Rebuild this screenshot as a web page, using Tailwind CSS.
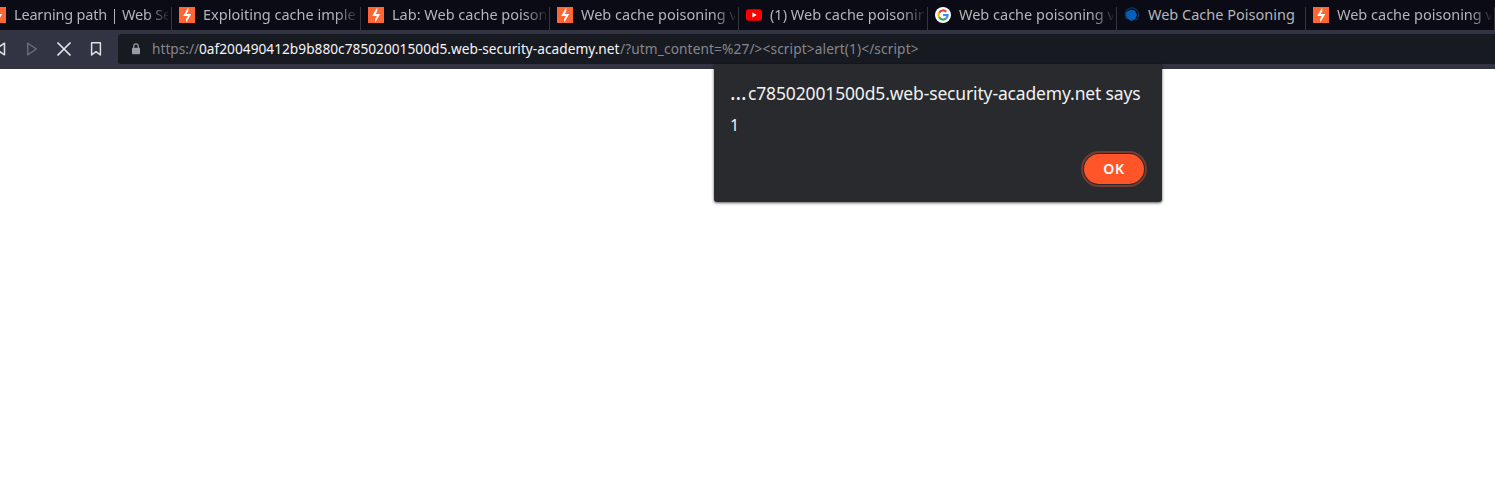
<!DOCTYPE html>
<html lang="en">
<head>
<meta charset="utf-8">
<title>Browser</title>
<script src="https://cdn.jsdelivr.net/npm/@tailwindcss/browser@4"></script>
</head>
<body class="h-[480px] overflow-hidden bg-white font-['Noto_Sans',sans-serif]">
<svg class="hidden">
  <symbol id="bolt" viewBox="0 0 16 16"><rect width="16" height="16" fill="#ff6633"/><path d="M9.3 0.8V4.2L7.6 6.9H12.2L8.6 13.2L7.2 15.4V11.8L9 9H4.2L7.8 2.8Z" fill="#fff"/></symbol>
</svg>
<div class="relative flex h-full flex-col">
  <div class="h-[30px] shrink-0 overflow-hidden bg-[#0a0b15]">
    <div class="-ml-[17px] flex h-full w-[1512px] text-[14.5px] text-[#b4b5ba]">
      <div class="flex h-full w-[189px] shrink-0 items-center pl-[7px]"><svg class="size-4 shrink-0"><use href="#bolt"/></svg><div class="ml-2 w-[154px] overflow-hidden tracking-[-0.19px] whitespace-nowrap [mask-image:linear-gradient(to_right,black_86%,transparent_102%)]">Learning path | Web Security</div><div class="ml-auto h-[23px] w-px self-end bg-[#34353d]"></div></div>
      <div class="flex h-full w-[189px] shrink-0 items-center pl-[7px]"><svg class="size-4 shrink-0"><use href="#bolt"/></svg><div class="ml-2 w-[154px] overflow-hidden whitespace-nowrap [mask-image:linear-gradient(to_right,black_86%,transparent_102%)]">Exploiting cache implementation</div><div class="ml-auto h-[23px] w-px self-end bg-[#34353d]"></div></div>
      <div class="flex h-full w-[189px] shrink-0 items-center pl-[7px]"><svg class="size-4 shrink-0"><use href="#bolt"/></svg><div class="ml-2 w-[154px] overflow-hidden whitespace-nowrap [mask-image:linear-gradient(to_right,black_86%,transparent_102%)]">Lab: Web cache poisoning</div><div class="ml-auto h-[23px] w-px self-end bg-[#34353d]"></div></div>
      <div class="flex h-full w-[189px] shrink-0 items-center pl-[7px]"><svg class="size-4 shrink-0"><use href="#bolt"/></svg><div class="ml-2 w-[154px] overflow-hidden whitespace-nowrap [mask-image:linear-gradient(to_right,black_86%,transparent_102%)]">Web cache poisoning via</div><div class="ml-auto h-[23px] w-px self-end bg-[#34353d]"></div></div>
      <div class="flex h-full w-[189px] shrink-0 items-center pl-[7px]"><svg class="size-4 shrink-0" viewBox="0 0 16 16"><rect y="2.3" width="16" height="11.4" rx="2.6" fill="#f00"/><path d="M6.4 5.6L10.7 8L6.4 10.4Z" fill="#fff"/></svg><div class="ml-2 w-[154px] overflow-hidden whitespace-nowrap [mask-image:linear-gradient(to_right,black_86%,transparent_102%)]">(1) Web cache poisoning</div><div class="ml-auto h-[23px] w-px self-end bg-[#34353d]"></div></div>
      <div class="flex h-full w-[189px] shrink-0 items-center pl-[7px]"><svg class="size-4 shrink-0" viewBox="0 0 16 16" fill="none" stroke-width="2.2"><circle cx="8" cy="8" r="8" fill="#fff"/><path d="M4.1 5.7A4.6 4.6 0 0 1 11.3 4.8" stroke="#ea4335"/><path d="M4.1 10.3A4.6 4.6 0 0 1 4.1 5.7" stroke="#fbbc05"/><path d="M11 11.5A4.6 4.6 0 0 1 4.1 10.3" stroke="#34a853"/><path d="M8.1 8H12.6A4.6 4.6 0 0 1 11 11.5" stroke="#4285f4"/></svg><div class="ml-2 w-[154px] overflow-hidden whitespace-nowrap [mask-image:linear-gradient(to_right,black_86%,transparent_102%)]">Web cache poisoning via</div><div class="ml-auto h-[23px] w-px self-end bg-[#34353d]"></div></div>
      <div class="flex h-full w-[189px] shrink-0 items-center pl-[7px]"><svg class="size-4 shrink-0" viewBox="0 0 16 16" fill="none"><path d="M3.5 12.5A6.6 6.6 0 0 1 5 1.6A6.6 6.6 0 0 1 13.6 4A6.8 6.8 0 0 1 12 13" stroke="#123158" stroke-width="1.3"/><path d="M2.4 4.9L6.5 2.7L11 3.5L12.9 8L11.4 12.2L7.2 14L3.2 11.2L1.9 8Z" fill="#075fb9"/></svg><div class="ml-2 w-[154px] overflow-hidden whitespace-nowrap">Web Cache Poisoning</div><div class="ml-auto h-[23px] w-px self-end bg-[#34353d]"></div></div>
      <div class="flex h-full w-[189px] shrink-0 items-center pl-[7px]"><svg class="size-4 shrink-0"><use href="#bolt"/></svg><div class="ml-2 w-[154px] overflow-hidden whitespace-nowrap [mask-image:linear-gradient(to_right,black_86%,transparent_102%)]">Web cache poisoning via</div><div class="ml-auto h-[23px] w-px self-end bg-[#34353d]"></div></div>
    </div>
  </div>
  <div class="flex h-[39px] shrink-0 items-start bg-[#323443]">
    <svg class="h-[39px] w-[118px] shrink-0" viewBox="0 0 118 39" fill="none" stroke-linejoin="round" stroke-width="1.5">
      <path d="M4.5 13.2V24.8L-4 19Z" stroke="#dedfe4"/>
      <path d="M27.7 13.2V24.8L36.3 19Z" stroke="#686a76"/>
      <path d="M57.5 12.5L70.5 25.5M70.5 12.5L57.5 25.5" stroke="#e4e5ea" stroke-width="1.7"/>
      <path d="M91.6 12.8H100.4V25L96 21.7L91.6 25Z" stroke="#dedfe4"/>
    </svg>
    <div class="mt-1 flex h-[30px] flex-1 items-center rounded-l-[3px] bg-[#181a21] pl-[14px] whitespace-nowrap text-[#85878d]">
      <svg class="h-3 w-2 shrink-0" viewBox="0 0 8 12"><path d="M1.7 5.5V3.2a2.3 2.3 0 0 1 4.6 0V5.5" fill="none" stroke="#9a9ca3" stroke-width="1.2"/><rect y="4.7" width="8" height="6.6" rx=".8" fill="#9a9ca3"/></svg>
      <div class="ml-3 flex pt-px text-[13.7px]"><span class="w-[47px]">https://</span><span class="w-[421px] tracking-[0.015px] text-[#f5f5f7]">0af200490412b9b880c78502001500d5.web-security-academy.net</span><span class="tracking-[0.11px]">/?utm_content=%27/&gt;&lt;script&gt;alert(1)&lt;/script&gt;</span></div>
    </div>
  </div>
  <div class="absolute top-16 left-[714px] flex h-[138px] w-[448px] flex-col rounded-b-[3px] bg-[#292a2d] pr-[18px] pl-4 text-[#f1f1f2] shadow-[0_1px_3px_rgba(0,0,0,0.65)]">
    <div class="mt-4 flex h-6 items-baseline text-[17.5px] leading-6 tracking-[-0.15px] whitespace-nowrap"><span class="w-[18px] text-[21px] leading-6">…</span><span>c78502001500d5.web-security-academy.net says</span></div>
    <div class="mt-[11px] h-5 text-[16px] leading-5">1</div>
    <button class="mt-[19px] h-[30px] w-[60px] self-end rounded-full bg-[#ff5529] pb-[2px] text-[14px] font-semibold tracking-[0.8px] text-white outline-2 outline-offset-1 outline-[#753b2e]">OK</button>
  </div>
</div>
</body>
</html>
